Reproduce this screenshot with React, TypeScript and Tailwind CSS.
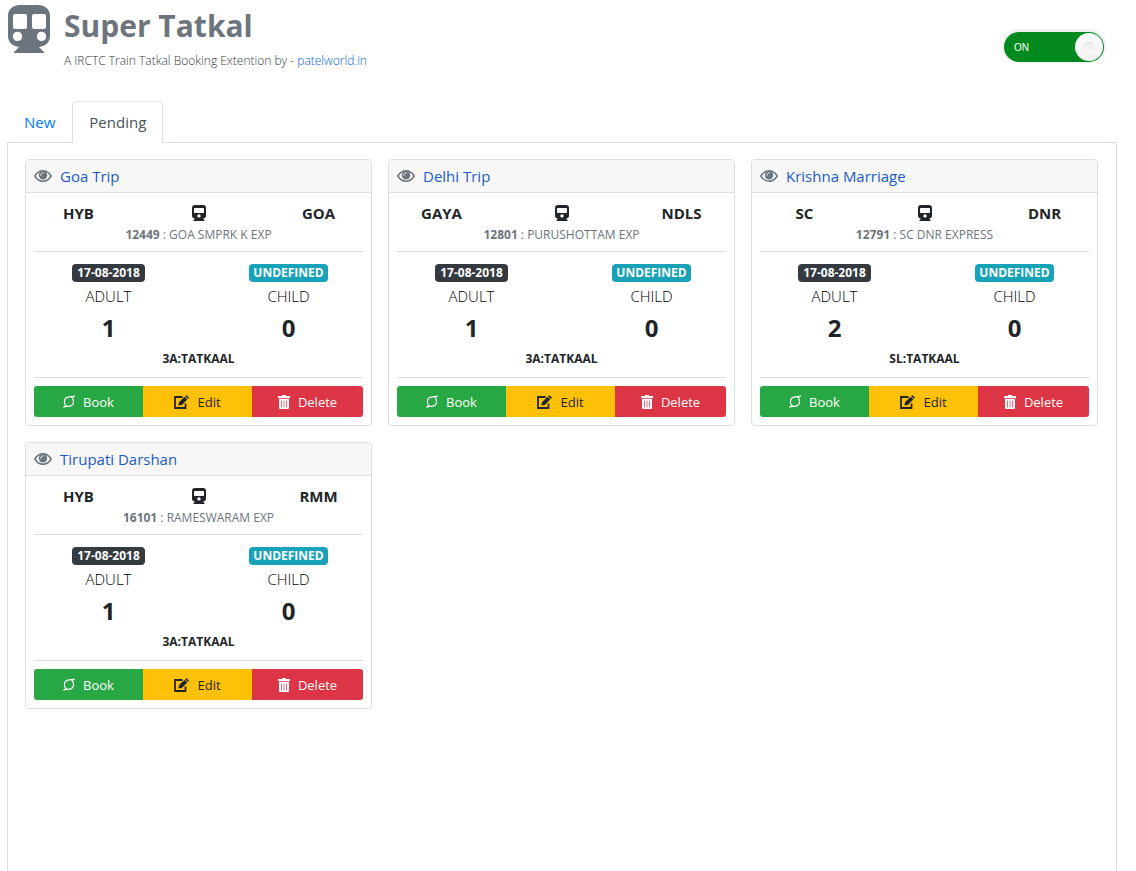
import { useState } from "react";

type Trip = {
  name: string;
  from: string;
  to: string;
  number: string;
  train: string;
  adults: number;
  children: number;
  quota: string;
};

const trips: Trip[] = [
  { name: "Goa Trip", from: "HYB", to: "GOA", number: "12449", train: "GOA SMPRK K EXP", adults: 1, children: 0, quota: "3A:TATKAAL" },
  { name: "Delhi Trip", from: "GAYA", to: "NDLS", number: "12801", train: "PURUSHOTTAM EXP", adults: 1, children: 0, quota: "3A:TATKAAL" },
  { name: "Krishna Marriage", from: "SC", to: "DNR", number: "12791", train: "SC DNR EXPRESS", adults: 2, children: 0, quota: "SL:TATKAAL" },
  { name: "Tirupati Darshan", from: "HYB", to: "RMM", number: "16101", train: "RAMESWARAM EXP", adults: 1, children: 0, quota: "3A:TATKAAL" },
];

function LogoIcon() {
  return (
    <svg viewBox="0 0 42 48" className="h-12 w-[42px] shrink-0 fill-[#6c757d]" aria-hidden="true">
      <path
        fillRule="evenodd"
        d="M12 0h18c7 0 12 4 12 11v20c0 6-4 10-11 11l5 5v1H6v-1l5-5C4 41 0 37 0 31V11C0 4 5 0 12 0ZM7 9a2 2 0 0 0-2 2v11a2 2 0 0 0 2 2h10a2 2 0 0 0 2-2V11a2 2 0 0 0-2-2ZM26 9a2 2 0 0 0-2 2v11a2 2 0 0 0 2 2h10a2 2 0 0 0 2-2V11a2 2 0 0 0-2-2ZM9.500 26.700a4.700 4.700 0 1 0 0 9.400a4.700 4.700 0 0 0 0-9.400ZM33.500 26.700a4.700 4.700 0 1 0 0 9.400a4.700 4.700 0 0 0 0-9.400Z"
      />
    </svg>
  );
}

function EyeIcon() {
  return (
    <svg viewBox="0 0 18 12" className="h-3 w-[18px] shrink-0" aria-hidden="true">
      <path d="M.8 6C3 2.500 5.800.8 9 .8S15 2.500 17.200 6C15 9.500 12.200 11.200 9 11.200S3 9.500.8 6Z" fill="none" stroke="#6c757d" strokeWidth="1.500" />
      <circle cx="9" cy="5.300" r="4.200" fill="#6c757d" />
      <path d="M6.700 5.300C6.700 3.900 7.800 2.900 9.200 2.900" fill="none" stroke="#f7f7f7" strokeWidth="1" strokeLinecap="round" />
    </svg>
  );
}

function TrainIcon() {
  return (
    <svg viewBox="0 0 14 16" className="h-4 w-3.5 fill-[#212529]" aria-hidden="true">
      <path
        fillRule="evenodd"
        d="M3 0h8a3 3 0 0 1 3 3v7.500a3 3 0 0 1-3 3L12.500 15v1h-11v-1L3 13.500a3 3 0 0 1-3-3V3a3 3 0 0 1 3-3ZM2.800 3a.8.8 0 0 0-.8.8v3.400a.8.8 0 0 0 .8.8h8.400a.8.8 0 0 0 .8-.8V3.800a.8.8 0 0 0-.8-.8ZM7 9.200a1.700 1.700 0 1 0 0 3.400a1.700 1.700 0 0 0 0-3.400Z"
      />
    </svg>
  );
}

function BookIcon() {
  return (
    <svg viewBox="0 0 12 13" className="h-[13px] w-3" fill="none" stroke="#fff" strokeWidth="1.200" aria-hidden="true">
      <path d="M11.700.9C10 1.900 8.200 1.600 6.300 1.800C3.300 2 1.400 4.200 1.400 6.700C1.400 8.400 2 9.700 3 10.500C2.300 11.300 1.500 11.900.4 12.100C2.200 11.300 4 11.500 5.800 11.300C8.700 11 10.500 9 10.500 6.400C10.500 4.700 10 3.500 9 2.600C9.700 1.800 10.600 1.300 11.700.9Z" />
    </svg>
  );
}

function EditIcon() {
  return (
    <svg viewBox="0 0 15 14" className="h-3.5 w-[15px]" aria-hidden="true">
      <path d="M8.500 2H1v11h10.500V8.500" fill="none" stroke="#212529" strokeWidth="1.800" />
      <path d="M4.300 10.500 5 7.300l5.500-5.500 2.800 2.800-5.500 5.500ZM11.200 1.200 12.300.1l2.700 2.700-1.100 1.100Z" fill="#212529" />
    </svg>
  );
}

function TrashIcon() {
  return (
    <svg viewBox="0 0 12 14" className="h-3.5 w-3 fill-white" aria-hidden="true">
      <path fillRule="evenodd" d="M4 0h4v1h4v2.200H0V1h4ZM1 4h10v9a1 1 0 0 1-1 1H2a1 1 0 0 1-1-1ZM3.200 5.500v7h.7v-7ZM5.650 5.500v7h.7v-7ZM8.100 5.500v7h.7v-7Z" />
    </svg>
  );
}

function Passengers({ label, count }: { label: string; count: number }) {
  return (
    <>
      <span className="mt-0.5 text-[15px] leading-6 font-light text-black">{label}</span>
      <span className="mt-0.5 text-2xl leading-9 font-bold">{count}</span>
    </>
  );
}

function TripCard({ trip }: { trip: Trip }) {
  return (
    <article className="rounded border border-[#dfdfdf] bg-white">
      <header className="flex h-[33px] items-center gap-2 rounded-t border-b border-[#dfdfdf] bg-[#f7f7f7] px-2">
        <EyeIcon />
        <a href="#" className="text-[15px] leading-6 text-[#1a5bc4]">{trip.name}</a>
      </header>
      <div className="px-2 pb-2">
        <div className="border-b border-[#dfdfdf] pt-2 pb-[7px] text-center">
          <div className="grid grid-cols-[89px_1fr_89px] items-center text-[15px] leading-6 font-bold">
            <span>{trip.from}</span>
            <span className="flex justify-center"><TrainIcon /></span>
            <span>{trip.to}</span>
          </div>
          <p className="mt-px text-xs leading-[18px] text-[#6c757d]">
            <b>{trip.number}</b> : {trip.train}
          </p>
        </div>
        <div className="border-b border-[#dfdfdf] pt-3 pb-2 text-center">
          <div className="grid grid-cols-[149px_1fr_149px]">
            <div className="flex flex-col items-center">
              <span className="rounded bg-[#343a40] px-[5px] text-xs leading-[18px] font-bold text-white">17-08-2018</span>
              <Passengers label="ADULT" count={trip.adults} />
            </div>
            <div className="col-start-3 flex flex-col items-center">
              <span className="rounded bg-[#17a2b8] px-1 text-xs leading-[18px] font-bold text-white">UNDEFINED</span>
              <Passengers label="CHILD" count={trip.children} />
            </div>
          </div>
          <p className="pt-[3px] text-xs leading-5 font-bold">{trip.quota}</p>
        </div>
        <div className="mt-2 grid grid-cols-[109fr_109fr_111fr] overflow-hidden rounded-[3px] text-[13px] leading-5">
          <button type="button" className="flex h-[31px] items-center justify-center gap-2 bg-[#28a745] text-white"><BookIcon />Book</button>
          <button type="button" className="flex h-[31px] items-center justify-center gap-2 bg-[#ffc107] text-[#212529]"><EditIcon />Edit</button>
          <button type="button" className="flex h-[31px] items-center justify-center gap-2 bg-[#dc3545] text-white"><TrashIcon />Delete</button>
        </div>
      </div>
    </article>
  );
}

export default function App() {
  const [on, setOn] = useState(true);
  return (
    <div className="flex min-h-screen flex-col bg-white pr-[19px] pl-[7px] font-['Open_Sans','Noto_Sans',sans-serif] text-[#212529]">
      <header className="flex items-start justify-between pt-[5px] pr-[13px] pl-px">
        <div className="flex gap-[14px]">
          <LogoIcon />
          <div>
            <h1 className="text-[30px] leading-[42px] font-bold text-[#6c757d]">Super Tatkal</h1>
            <p className="mt-[5px] text-xs leading-[18px] font-light text-[#343a40]">
              A IRCTC Train Tatkal Booking Extention by - <a href="#" className="text-[#0062e0]">patelworld.in</a>
            </p>
          </div>
        </div>
        <label className="mt-[27px] flex h-[30px] w-[100px] cursor-pointer items-center justify-between rounded-full bg-[#04891e] pr-px pl-[10px] shadow-[0_-1px_0_2px_#f1f1f1]">
          <input type="checkbox" className="sr-only" aria-label="Extension enabled" checked={on} onChange={() => setOn(!on)} />
          <span className="font-['Liberation_Sans',sans-serif] text-[10px] text-white">{on ? "ON" : "OFF"}</span>
          <span className="flex size-7 items-center justify-center rounded-full bg-linear-to-b from-white to-[#f0f0f0]">
            <span className="size-3 rounded-full bg-linear-to-b from-[#e8e8e8] to-[#fafafa]" />
          </span>
        </label>
      </header>
      <nav className="mt-[31px] flex border-b border-[#dee2e6] text-[15px] leading-6">
        <a href="#" className="px-[17px] pt-[9px] pb-2 text-[#007bff]">New</a>
        <a href="#" className="-mb-px rounded-t border border-b-0 border-[#dee2e6] bg-white px-4 pt-2 pb-[9px] text-[#495057]">Pending</a>
      </nav>
      <main className="grow border-x border-[#dee2e6] pt-4 pr-[18px] pl-[17px]">
        <div className="grid grid-cols-3 gap-4">
          {trips.map((trip) => (
            <TripCard key={trip.name} trip={trip} />
          ))}
        </div>
      </main>
    </div>
  );
}
